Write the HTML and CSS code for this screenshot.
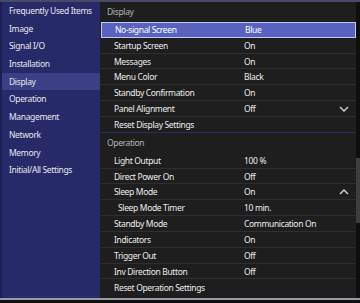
FILE: index.html
```html
<!DOCTYPE html>
<html>
<head>
  <title>projector menu</title>
  <link rel="stylesheet" href="styles.css">
</head>
<body>
  <div class="frame">
    <div class="main">
      <div class="sidebar">
        <div class="navitem">Frequently Used Items</div>
        <div class="navitem">Image</div>
        <div class="navitem">Signal I/O</div>
        <div class="navitem">Installation</div>
        <div class="navitem navon">Display</div>
        <div class="navitem">Operation</div>
        <div class="navitem">Management</div>
        <div class="navitem">Network</div>
        <div class="navitem">Memory</div>
        <div class="navitem">Initial/All Settings</div>
      </div>
      <div class="panel">
        <div class="list">
          <div class="sechead">Display</div>
          <div class="row selected"><span class="label">No-signal Screen</span><span class="value">Blue</span></div>
          <div class="row"><span class="label">Startup Screen</span><span class="value">On</span></div>
          <div class="row"><span class="label">Messages</span><span class="value">On</span></div>
          <div class="row"><span class="label">Menu Color</span><span class="value">Black</span></div>
          <div class="row"><span class="label">Standby Confirmation</span><span class="value">On</span></div>
          <div class="row"><span class="label">Panel Alignment</span><span class="value">Off</span>
            <svg class="chev" width="10" height="6" viewBox="0 0 10 6"><path d="M1 1 L5 5 L9 1" fill="none" stroke="#d8d8e8" stroke-width="1.3"/></svg>
          </div>
          <div class="row secend"><span class="label">Reset Display Settings</span></div>
          <div class="sechead">Operation</div>
          <div class="row"><span class="label">Light Output</span><span class="value">100 %</span></div>
          <div class="row"><span class="label">Direct Power On</span><span class="value">Off</span></div>
          <div class="row"><span class="label">Sleep Mode</span><span class="value">On</span>
            <svg class="chev" width="10" height="6" viewBox="0 0 10 6"><path d="M1 5 L5 1 L9 5" fill="none" stroke="#d8d8e8" stroke-width="1.3"/></svg>
          </div>
          <div class="row"><span class="label sub">Sleep Mode Timer</span><span class="value">10 min.</span></div>
          <div class="row"><span class="label">Standby Mode</span><span class="value">Communication On</span></div>
          <div class="row"><span class="label">Indicators</span><span class="value">On</span></div>
          <div class="row"><span class="label">Trigger Out</span><span class="value">Off</span></div>
          <div class="row"><span class="label">Inv Direction Button</span><span class="value">Off</span></div>
          <div class="row last"><span class="label">Reset Operation Settings</span></div>
        </div>
        <div class="scrollbar"><div class="thumb"></div></div>
      </div>
    </div>
  </div>
</body>
</html>
```
FILE: styles.css
```css
body{
 margin: 0;
 background-color: #101010;
 font-family: "Noto Sans", "Open Sans", sans-serif;
 font-size: 8.5px;
 letter-spacing: -0.35px;
}
.frame{
 width: 360px;
 height: 303px;
 box-sizing: border-box;
 border-top: 2px solid #4a4a68;
 border-bottom: 3px solid #101010;
 background-color: #1e1e1e;
 display: flex;
 flex-direction: column;
}
.main{
 flex: 1;
 display: flex;
 border-bottom: 2px solid #9a9aa6;
}
.sidebar{
 width: 100px;
 background-color: #262a68;
 border-left: 2px solid #1c1f52;
 box-sizing: border-box;
}
.navitem{
 height: 17.7px;
 line-height: 17.7px;
 padding-left: 7px;
 color: #e6e6ee;
 white-space: nowrap;
}
.navon{
 background-color: #3a3f86;
}
.panel{
 flex: 1;
 display: flex;
}
.list{
 flex: 1;
}
.sechead{
 height: 20px;
 line-height: 20px;
 padding-left: 7px;
 color: #b4b4b8;
}
.row{
 height: 15.83px;
 box-sizing: border-box;
 border-bottom: 1px solid #2f2f2f;
 display: flex;
 align-items: center;
 padding-left: 14px;
 color: #ececec;
 white-space: nowrap;
}
.label{
 width: 130px;
}
.sub{
 padding-left: 4px;
 box-sizing: border-box;
}
.value{
 flex: 1;
}
.chev{
 margin-right: 7px;
}
.selected{
 background-color: #5863bf;
 border: 1px solid #c2c8f0;
 padding-left: 13px;
 margin-left: 1px;
 color: #ffffff;
}
.secend{
 border-bottom: 1px solid #2a2a5c;
}
.last{
 border-bottom: none;
}
.scrollbar{
 width: 4px;
 background-color: #0e0e0e;
}
.thumb{
 margin-top: 156px;
 height: 65px;
 background-color: #3e3e3e;
}
```
